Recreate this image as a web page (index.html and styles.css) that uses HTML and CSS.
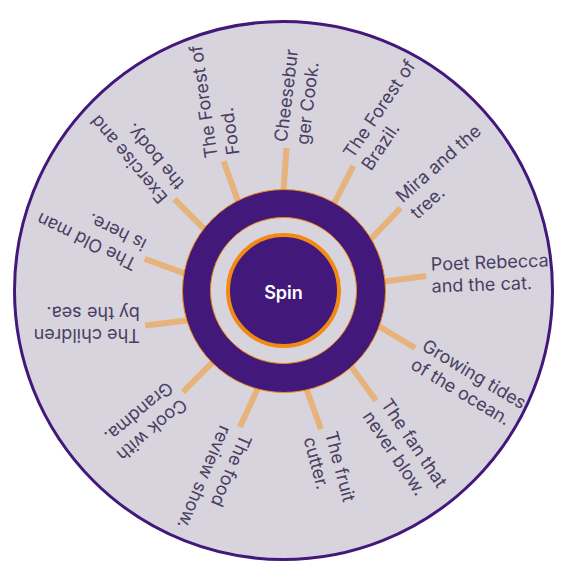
FILE: index.html
```html
<!DOCTYPE html>
<html>
<head>
    <title>Spin the Wheel</title>
    <link rel="stylesheet" href="styles.css">
</head>
<body>
    <div class="stage">
        <div class="wheel">
            <!-- --t/--d: label angle and tilt, --s/--r: spoke angle and tilt -->
            <div class="item" style="--t:-87deg; --d:4deg; --s:-89deg; --r:3deg"><span class="spoke"></span><span class="label">Cheesebur<br>ger Cook.</span></div>
            <div class="item" style="--t:-60.5deg; --d:4.5deg; --s:-61deg; --r:-2deg"><span class="spoke"></span><span class="label">The Forest of<br>Brazil.</span></div>
            <div class="item" style="--t:-34.5deg; --d:-7deg; --s:-35.5deg; --r:-11deg"><span class="spoke"></span><span class="label">Mira and the<br>tree.</span></div>
            <div class="item" style="--t:-6deg; --d:4deg; --s:-6deg; --r:-1.5deg"><span class="spoke"></span><span class="label">Poet Rebecca<br>and the cat.</span></div>
            <div class="item" style="--t:25deg; --d:6deg; --s:23.5deg; --r:7.5deg"><span class="spoke"></span><span class="label">Growing tides<br>of the ocean.</span></div>
            <div class="item" style="--t:51.5deg; --d:4.5deg; --s:50deg; --r:4deg"><span class="spoke"></span><span class="label">The fan that<br>never blow.</span></div>
            <div class="item" style="--t:76deg; --d:-1deg; --s:75deg; --r:-5deg"><span class="spoke"></span><span class="label">The fruit<br>cutter.</span></div>
            <div class="item" style="--t:109deg; --d:4deg; --s:108deg; --r:7deg"><span class="spoke"></span><span class="label">The food<br>review show.</span></div>
            <div class="item" style="--t:136deg; --d:4deg; --s:135deg; --r:0deg"><span class="spoke"></span><span class="label">Cook with<br>Grandma.</span></div>
            <div class="item" style="--t:167deg; --d:13deg; --s:166deg; --r:7deg"><span class="spoke"></span><span class="label">The children<br>by the sea.</span></div>
            <div class="item" style="--t:194deg; --d:12deg; --s:193deg; --r:7deg"><span class="spoke"></span><span class="label">The Old man<br>is here.</span></div>
            <div class="item" style="--t:221deg; --d:9deg; --s:220deg; --r:5deg"><span class="spoke"></span><span class="label">Exercise and<br>the body.</span></div>
            <div class="item" style="--t:245.5deg; --d:16.5deg; --s:245deg; --r:5deg"><span class="spoke"></span><span class="label">The Forest of<br>Food.</span></div>

            <div class="hub">
                <div class="hub-gap">
                    <button class="spin">Spin</button>
                </div>
            </div>
        </div>
    </div>
</body>
</html>
```

FILE: styles.css
```css
body { margin: 0; background: #fff; font-family: Inter, "Noto Sans", sans-serif; }
.stage { padding: 20px 0 0 13px; }

.wheel {
    position: relative;
    width: 535px;
    height: 535px;
    border: 3px solid #42187a;
    border-radius: 50%;
    background: #d8d4dd;
    display: flex;
    align-items: center;
    justify-content: center;
}

.item { position: absolute; left: 50%; top: 50%; width: 0; height: 0; }
.spoke {
    position: absolute;
    left: -48px;
    top: -3px;
    width: 48px;
    height: 6px;
    background: #e6b37c;
    transform-origin: 100% 50%;
    transform: rotate(var(--s)) translateX(143px) rotate(var(--r));
}
.label {
    position: absolute;
    left: 0;
    top: -22px;
    white-space: nowrap;
    font-size: 18px;
    line-height: 22px;
    color: #4a3e63;
    transform-origin: 0 50%;
    transform: rotate(var(--t)) translateX(148px) rotate(var(--d));
}

.hub {
    position: relative;
    width: 202px;
    height: 202px;
    border: 1px solid #f08a12;
    border-radius: 50%;
    background: #42187a;
    display: flex;
    align-items: center;
    justify-content: center;
}
.hub-gap {
    width: 145px;
    height: 145px;
    border: 1px solid #f08a12;
    border-radius: 50%;
    background: #d8d4dd;
    display: flex;
    align-items: center;
    justify-content: center;
}
.spin {
    width: 115px;
    height: 115px;
    border: 4px solid #f08a12;
    border-radius: 50%;
    background: #42187a;
    color: #fff;
    font-family: Inter, sans-serif;
    font-size: 18px;
    font-weight: 600;
    padding: 4px 0 0;
    cursor: pointer;
}
```
